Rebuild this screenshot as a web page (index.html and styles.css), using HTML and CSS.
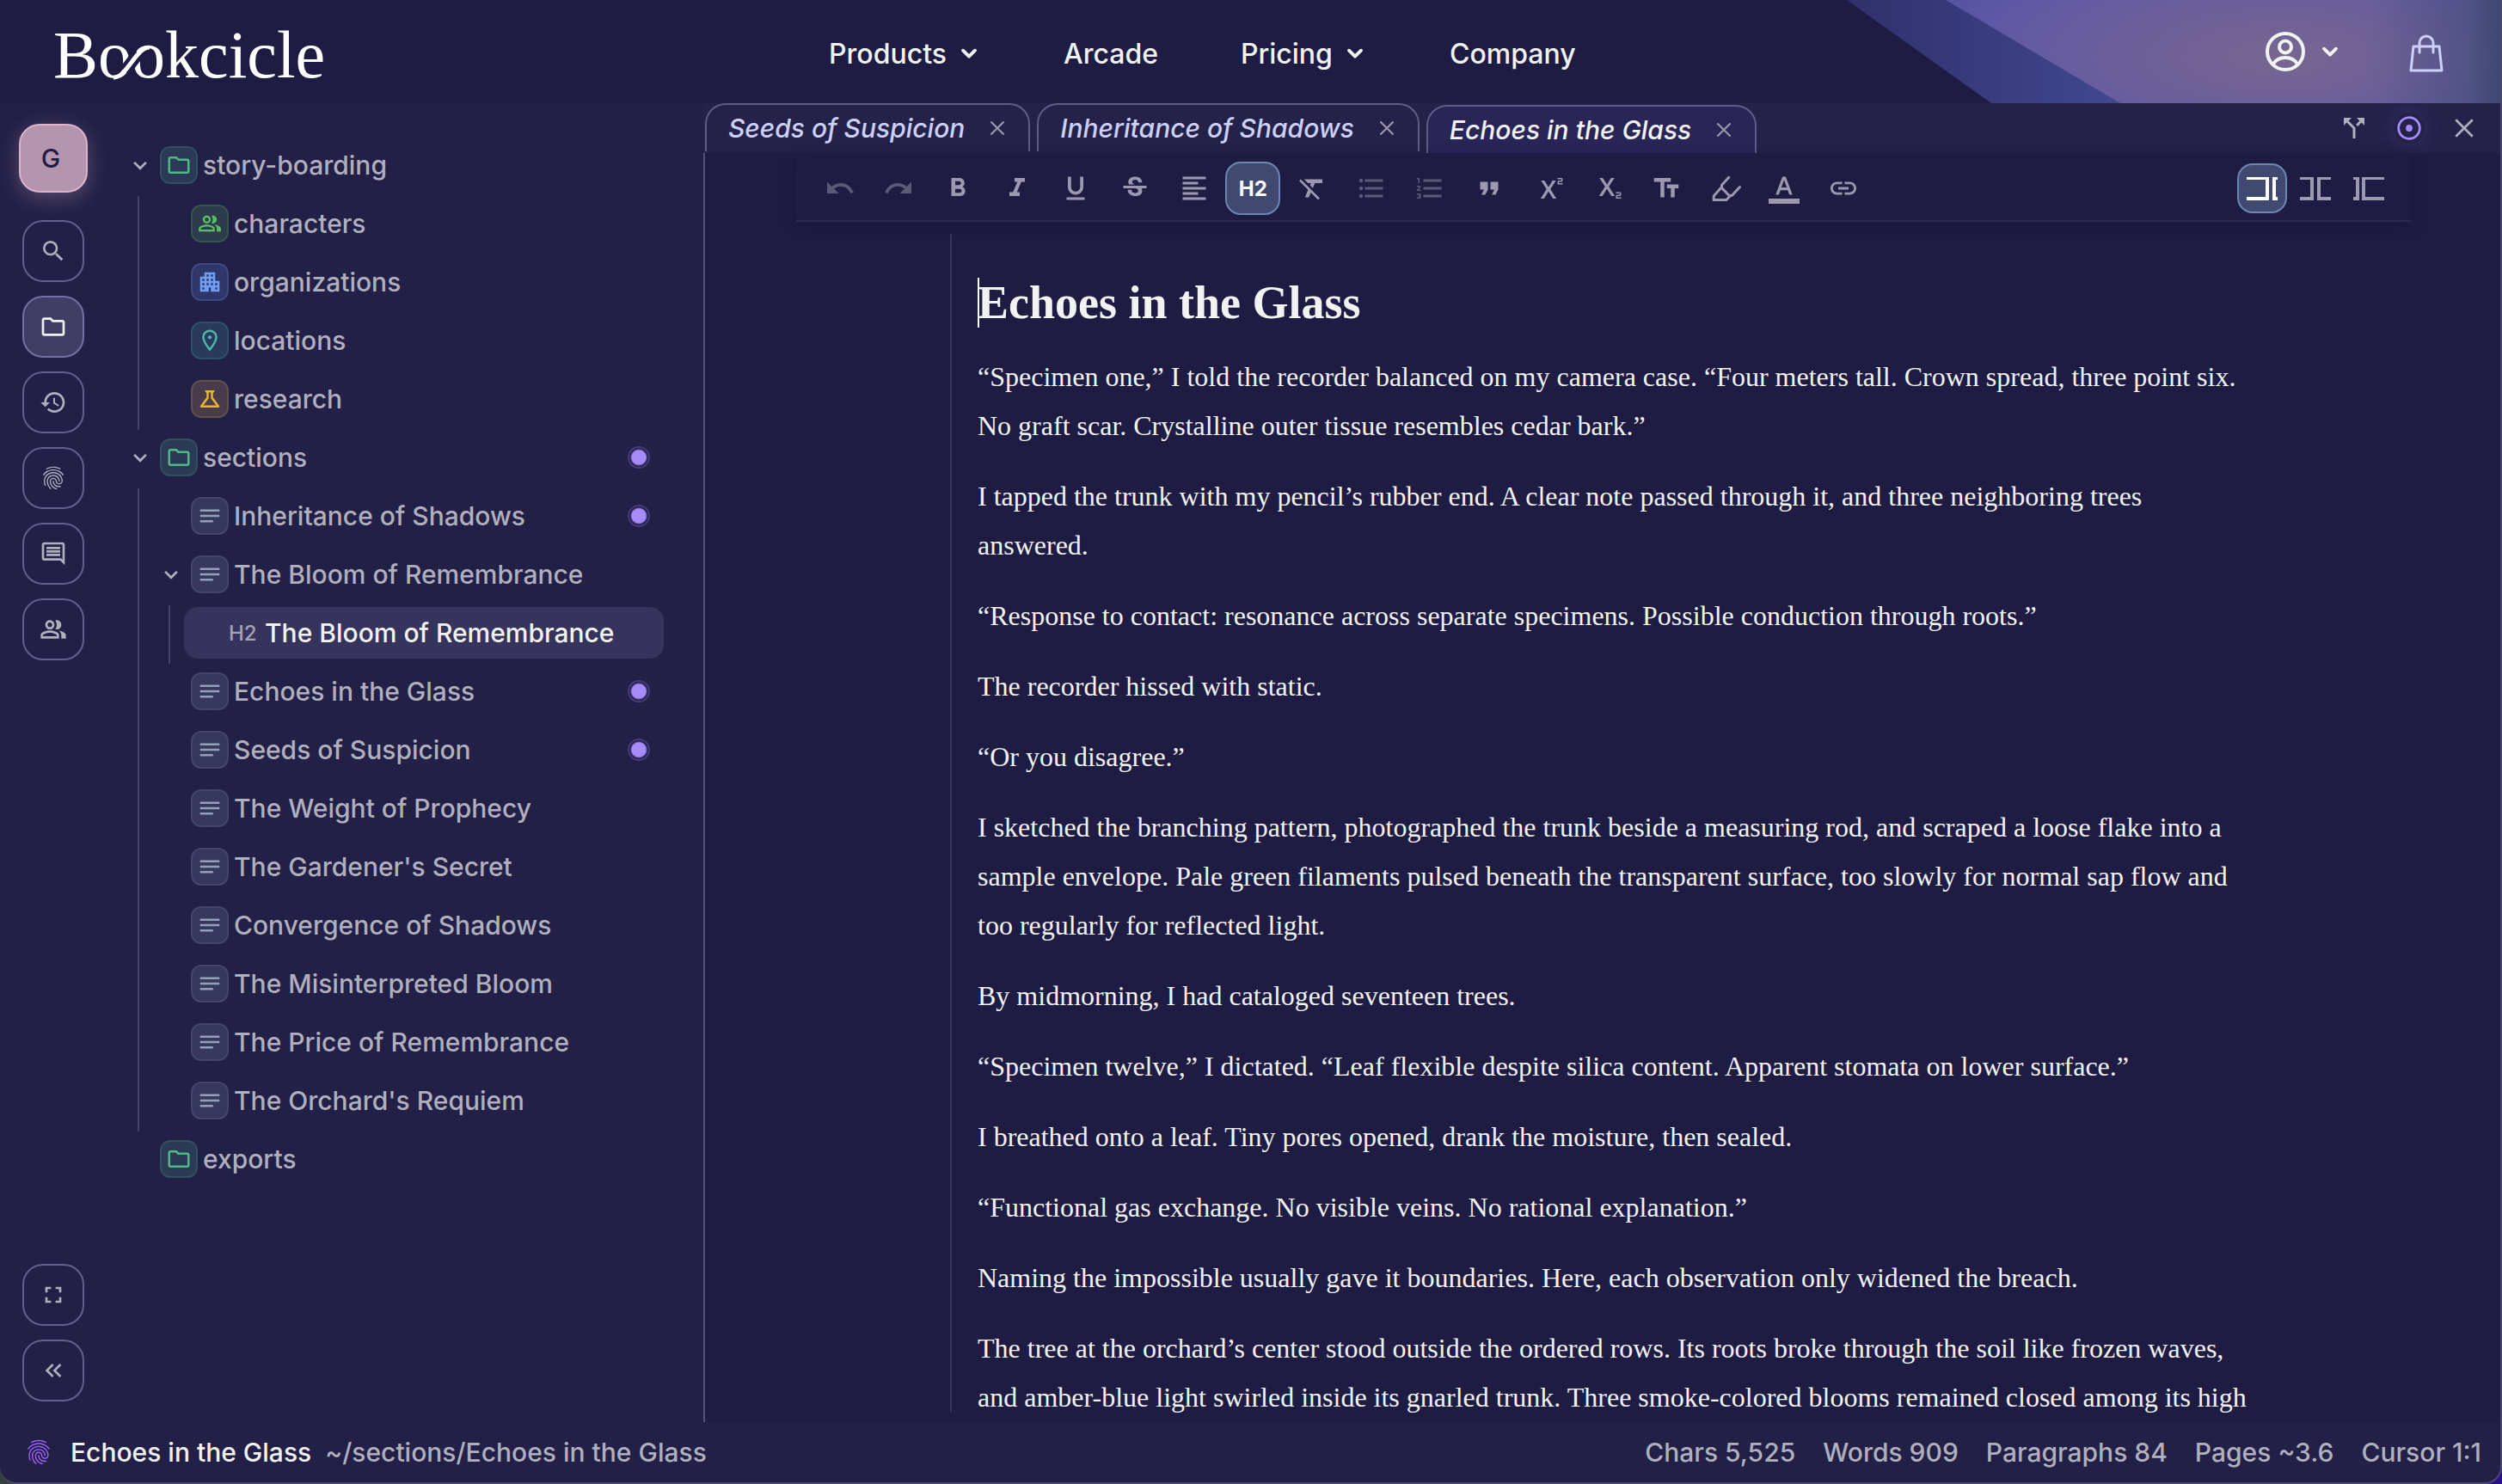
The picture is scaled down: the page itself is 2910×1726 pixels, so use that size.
FILE: index.html
```html
<!DOCTYPE html>
<html lang="en">
<head>
    <meta charset="UTF-8">
    <meta name="viewport" content="width=device-width, initial-scale=1.0">
    <title>Bookcicle</title>
    <link rel="stylesheet" href="styles.css">
</head>
<body>
    <!-- icon sprite -->
    <svg class="sprite" aria-hidden="true">
        <symbol id="i-chevron" viewBox="0 0 24 24"><path d="M6 9.200l6 6 6-6" fill="none" stroke="currentColor" stroke-width="3.300" stroke-linecap="round" stroke-linejoin="round"/></symbol>
        <symbol id="i-chevron-thin" viewBox="0 0 24 24"><path d="M6.500 9.500l5.500 5.500 5.500-5.500" fill="none" stroke="currentColor" stroke-width="2.200"/></symbol>
        <symbol id="i-close" viewBox="0 0 24 24"><path d="M5.5 5.5l13 13M18.500 5.500l-13 13" fill="none" stroke="currentColor" stroke-width="1.800"/></symbol>
        <symbol id="i-search" viewBox="0 0 24 24"><path d="M15.5 14h-.79l-.28-.27A6.471 6.471 0 0 0 16 9.5 6.5 6.5 0 1 0 9.500 16c1.610 0 3.090-.59 4.230-1.570l.27.28v.79l5 4.990L20.490 19l-4.990-5zm-6 0C7.010 14 5 11.990 5 9.500S7.010 5 9.500 5 14 7.010 14 9.500 11.990 14 9.500 14z"/></symbol>
        <symbol id="i-folder" viewBox="0 0 24 24"><path d="M9.170 6l2 2H20v10H4V6h5.170M10 4H4c-1.100 0-1.990.9-1.990 2L2 18c0 1.100.9 2 2 2h16c1.100 0 2-.9 2-2V8c0-1.100-.9-2-2-2h-8l-2-2z"/></symbol>
        <symbol id="i-history" viewBox="0 0 24 24"><path d="M13 3c-4.970 0-9 4.030-9 9H1l3.890 3.890.07.14L9 12H6c0-3.870 3.130-7 7-7s7 3.130 7 7-3.130 7-7 7c-1.930 0-3.680-.79-4.940-2.060l-1.420 1.420C8.270 19.990 10.510 21 13 21c4.970 0 9-4.030 9-9s-4.030-9-9-9zm-1 5v5l4.280 2.540.72-1.210-3.500-2.080V8H12z"/></symbol>
        <symbol id="i-fingerprint" viewBox="0 0 24 24"><path d="M17.81 4.47c-.08 0-.16-.02-.23-.06C15.66 3.42 14 3 12.01 3c-1.98 0-3.86.47-5.57 1.41-.24.13-.54.04-.68-.2-.13-.24-.04-.55.2-.68C7.82 2.52 9.86 2 12.01 2c2.13 0 3.99.47 6.03 1.52.25.13.34.43.21.67-.09.18-.26.28-.44.28zM3.5 9.72c-.1 0-.2-.03-.29-.09-.23-.16-.28-.47-.12-.7.99-1.4 2.25-2.5 3.75-3.27C9.98 4.04 14 4.03 17.15 5.65c1.5.77 2.76 1.86 3.75 3.25.16.22.11.54-.12.7-.23.16-.54.11-.7-.12-.9-1.26-2.04-2.25-3.39-2.94-2.87-1.47-6.54-1.47-9.4.01-1.36.7-2.5 1.7-3.4 2.96-.08.14-.23.21-.39.21zm6.25 12.07c-.13 0-.26-.05-.35-.15-.87-.87-1.34-1.43-2.01-2.64-.69-1.23-1.05-2.73-1.05-4.34 0-2.97 2.54-5.39 5.66-5.39s5.66 2.42 5.66 5.39c0 .28-.22.5-.5.5s-.5-.22-.5-.5c0-2.42-2.09-4.39-4.66-4.39-2.57 0-4.66 1.97-4.66 4.39 0 1.44.32 2.77.93 3.85.64 1.15 1.08 1.64 1.85 2.42.19.2.19.51 0 .71-.11.1-.24.15-.37.15zm7.17-1.85c-1.19 0-2.24-.3-3.1-.89-1.49-1.01-2.38-2.65-2.38-4.39 0-.28.22-.5.5-.5s.5.22.5.5c0 1.41.72 2.74 1.94 3.56.71.48 1.54.71 2.54.71.24 0 .64-.03 1.04-.1.27-.05.53.13.58.41.05.27-.13.53-.41.58-.57.11-1.07.12-1.21.12zM14.91 22c-.04 0-.09-.01-.13-.02-1.59-.44-2.63-1.03-3.72-2.1-1.4-1.39-2.17-3.24-2.17-5.22 0-1.62 1.38-2.94 3.08-2.94 1.7 0 3.08 1.32 3.08 2.94 0 1.07.93 1.94 2.08 1.94s2.08-.87 2.08-1.94c0-3.77-3.25-6.83-7.25-6.83-2.84 0-5.44 1.58-6.61 4.03-.39.81-.59 1.76-.59 2.8 0 .78.07 2.01.67 3.61.1.26-.03.55-.29.64-.26.1-.55-.04-.64-.29-.49-1.31-.73-2.61-.73-3.96 0-1.2.23-2.29.68-3.24 1.33-2.79 4.28-4.6 7.51-4.6 4.55 0 8.25 3.51 8.25 7.83 0 1.62-1.38 2.94-3.08 2.94s-3.08-1.32-3.08-2.94c0-1.07-.93-1.94-2.08-1.94s-2.08.87-2.08 1.94c0 1.71.66 3.31 1.87 4.51.95.94 1.86 1.46 3.27 1.85.27.07.42.35.35.61-.05.23-.26.38-.47.38z"/></symbol>
        <symbol id="i-comment" viewBox="0 0 24 24"><path d="M21.99 4c0-1.1-.89-2-1.99-2H4c-1.1 0-2 .9-2 2v12c0 1.1.9 2 2 2h14l4 4-.01-18zM20 4v13.17L18.83 16H4V4h16zM6 12h12v2H6zm0-3h12v2H6zm0-3h12v2H6z"/></symbol>
        <symbol id="i-people" viewBox="0 0 24 24"><path d="M16.67 13.13C18.04 14.06 19 15.32 19 17v3h4v-3c0-2.18-3.57-3.47-6.33-3.87zM15 12c2.21 0 4-1.79 4-4s-1.79-4-4-4c-.47 0-.91.1-1.33.24C14.5 5.27 15 6.58 15 8s-.5 2.73-1.33 3.76c.42.14.86.24 1.33.24zM9 12c2.21 0 4-1.79 4-4s-1.79-4-4-4-4 1.79-4 4 1.79 4 4 4zm0-6c1.1 0 2 .9 2 2s-.9 2-2 2-2-.9-2-2 .9-2 2-2zM9 13c-2.67 0-8 1.34-8 4v3h16v-3c0-2.66-5.33-4-8-4zm6 5H3v-.99C3.2 16.29 6.3 15 9 15s5.8 1.29 6 2v1z"/></symbol>
        <symbol id="i-fullscreen" viewBox="0 0 24 24"><path d="M7 14H5v5h5v-2H7v-3zm-2-4h2V7h3V5H5v5zm12 7h-3v2h5v-5h-2v3zM14 5v2h3v3h2V5h-5z"/></symbol>
        <symbol id="i-collapse" viewBox="0 0 24 24"><path d="M17.59 18L19 16.59 14.42 12 19 7.41 17.59 6l-6 6zM11 18l1.41-1.41L7.83 12l4.58-4.59L11 6l-6 6z"/></symbol>
        <symbol id="i-building" viewBox="0 0 24 24"><path d="M17 11V3H7v4H3v14h8v-4h2v4h8V11h-4zM7 19H5v-2h2v2zm0-4H5v-2h2v2zm0-4H5V9h2v2zm4 4H9v-2h2v2zm0-4H9V9h2v2zm0-4H9V5h2v2zm4 8h-2v-2h2v2zm0-4h-2V9h2v2zm0-4h-2V5h2v2zm4 12h-2v-2h2v2zm0-4h-2v-2h2v2z"/></symbol>
        <symbol id="i-pin" viewBox="0 0 24 24"><path d="M12 2C8.13 2 5 5.13 5 9c0 5.25 7 13 7 13s7-7.75 7-13c0-3.87-3.13-7-7-7zM7 9c0-2.76 2.24-5 5-5s5 2.24 5 5c0 2.88-2.88 7.19-5 9.88C9.92 16.21 7 11.85 7 9z"/><circle cx="12" cy="9" r="1.700"/></symbol>
        <symbol id="i-flask" viewBox="0 0 24 24"><path d="M13 11.33L18 18H6l5-6.67V6h2m2.96-2H8.04c-.42 0-.65.48-.39.81L9 6.5v4.17L3.2 18.4c-.49.66-.02 1.6.8 1.6h16c.82 0 1.29-.94.8-1.6L15 10.67V6.5l1.35-1.69c.26-.33.03-.81-.39-.81z"/></symbol>
        <symbol id="i-notes" viewBox="0 0 24 24"><path d="M3 18h12v-2H3v2zM3 6v2h18V6H3zm0 7h18v-2H3v2z"/></symbol>
        <symbol id="i-undo" viewBox="0 0 24 24"><path d="M12.5 8c-2.65 0-5.05.99-6.9 2.6L2 7v9h9l-3.62-3.62c1.39-1.16 3.16-1.88 5.12-1.88 3.54 0 6.55 2.31 7.6 5.5l2.37-.78C21.08 11.03 17.15 8 12.5 8z"/></symbol>
        <symbol id="i-redo" viewBox="0 0 24 24"><path d="M18.4 10.6C16.55 8.99 14.15 8 11.5 8c-4.65 0-8.58 3.03-9.96 7.22L3.9 16c1.05-3.19 4.05-5.5 7.6-5.5 1.95 0 3.73.72 5.12 1.88L13 16h9V7l-3.6 3.6z"/></symbol>
        <symbol id="i-bold" viewBox="0 0 24 24"><path d="M15.6 10.79c.97-.67 1.65-1.77 1.65-2.79 0-2.26-1.75-4-4-4H7v14h7.04c2.09 0 3.71-1.7 3.71-3.79 0-1.52-.86-2.82-2.15-3.42zM10 6.5h3c.83 0 1.5.67 1.5 1.5s-.67 1.5-1.5 1.5h-3v-3zm3.5 9H10v-3h3.5c.83 0 1.5.67 1.5 1.5s-.67 1.5-1.5 1.5z"/></symbol>
        <symbol id="i-italic" viewBox="0 0 24 24"><path d="M10 4v3h2.21l-3.42 8H6v3h8v-3h-2.21l3.42-8H18V4z"/></symbol>
        <symbol id="i-underline" viewBox="0 0 24 24"><path d="M12 17c3.31 0 6-2.69 6-6V3h-2.5v8c0 1.93-1.57 3.5-3.5 3.5S8.500 12.93 8.500 11V3H6v8c0 3.310 2.690 6 6 6zm-7 2v2h14v-2H5z"/></symbol>
        <symbol id="i-strike" viewBox="0 0 24 24"><path d="M6.850 7.080C6.850 4.370 9.450 3 12.240 3c1.640 0 3 .49 3.900 1.280.77.65 1.460 1.730 1.460 3.240h-3.010c0-.31-.05-.59-.15-.85-.29-.86-1.200-1.280-2.250-1.280-1.860 0-2.340 1.020-2.340 1.700 0 .48.25.88.74 1.210.38.25.77.48 1.410.7H7.390c-.21-.34-.54-.89-.54-1.920zM21 12v-2H3v2h9.620c1.150.45 1.960.75 1.960 1.970 0 1-.81 1.670-2.280 1.670-1.540 0-2.930-.54-2.930-2.510H6.400c0 .55.08 1.130.24 1.580.81 2.290 3.290 3.300 5.670 3.300 2.270 0 5.300-.89 5.300-4.050 0-.3-.01-1.160-.48-1.940H21V12z"/></symbol>
        <symbol id="i-align" viewBox="0 0 24 24"><path d="M15 15H3v2h12v-2zm0-8H3v2h12V7zM3 13h18v-2H3v2zm0 8h18v-2H3v2zM3 3v2h18V3H3z"/></symbol>
        <symbol id="i-clear" viewBox="0 0 24 24"><path d="M3.27 5L2 6.27l6.97 6.97L6.5 19h3l1.57-3.66L16.73 21 18 19.73 3.55 5.27 3.27 5zM6 5v.18L8.82 8h2.4l-.72 1.68 2.1 2.1L14.21 8H20V5H6z"/></symbol>
        <symbol id="i-bullets" viewBox="0 0 24 24"><path d="M4 10.5c-.83 0-1.5.67-1.5 1.5s.67 1.5 1.5 1.5 1.5-.67 1.5-1.5-.67-1.5-1.5-1.5zm0-6c-.83 0-1.5.67-1.5 1.5S3.17 7.5 4 7.5 5.5 6.83 5.5 6 4.83 4.5 4 4.5zm0 12c-.83 0-1.5.68-1.5 1.5s.68 1.5 1.5 1.5 1.5-.68 1.5-1.5-.67-1.5-1.5-1.5zM7 19h14v-2H7v2zm0-6h14v-2H7v2zm0-8v2h14V5H7z"/></symbol>
        <symbol id="i-numbers" viewBox="0 0 24 24"><path d="M2 17h2v.5H3v1h1v.5H2v1h3v-4H2v1zm1-9h1V4H2v1h1v3zm-1 3h1.8L2 13.1v.9h3v-1H3.2L5 10.9V10H2v1zm5-6v2h14V5H7zm0 14h14v-2H7v2zm0-6h14v-2H7v2z"/></symbol>
        <symbol id="i-quote" viewBox="0 0 24 24"><path d="M6 17h3l2-4V7H5v6h3zm8 0h3l2-4V7h-6v6h3z"/></symbol>
        <symbol id="i-super" viewBox="0 0 24 24"><path d="M22 7h-2v1h3v1h-4V7c0-.55.45-1 1-1h2V5h-3V4h3c.55 0 1 .45 1 1v1c0 .55-.45 1-1 1zM5.88 20h2.66l3.4-5.42h.12l3.4 5.42h2.66l-4.65-7.27L17.81 6h-2.68l-3.07 4.99h-.12L8.85 6H6.19l4.32 6.73L5.88 20z"/></symbol>
        <symbol id="i-sub" viewBox="0 0 24 24"><path d="M22 18h-2v1h3v1h-4v-2c0-.55.45-1 1-1h2v-1h-3v-1h3c.55 0 1 .45 1 1v1c0 .55-.45 1-1 1zM5.88 18h2.66l3.4-5.42h.12l3.4 5.42h2.66l-4.65-7.27L17.81 4h-2.68l-3.07 4.99h-.12L8.85 4H6.19l4.32 6.73L5.88 18z"/></symbol>
        <symbol id="i-size" viewBox="0 0 24 24"><path d="M2.5 4v3h5v12h3V7h5V4h-13zm19 5h-9v3h3v7h3v-7h3V9z"/></symbol>
        <symbol id="i-marker" viewBox="0 0 24 24"><path d="M14.500 3.500L9 9.500v2.200l5.800 6 2.200-.2 6-6.500M9 11l-6.200 7v3h9.700l3-3" fill="none" stroke="currentColor" stroke-width="2" stroke-linecap="round"/></symbol>
        <symbol id="i-color" viewBox="0 0 24 24"><path d="M0 20h24v4H0v-4zm5.490-3h2.420l1.270-3.580h5.650L16.090 17h2.420L13.250 3h-2.500L5.490 17zm4.420-5.610l2.030-5.790h.12l2.030 5.790H9.910z"/></symbol>
        <symbol id="i-link" viewBox="0 0 24 24"><path d="M3.9 12c0-1.71 1.39-3.1 3.1-3.1h4V7H7c-2.76 0-5 2.24-5 5s2.24 5 5 5h4v-1.9H7c-1.71 0-3.1-1.39-3.1-3.1zM8 13h8v-2H8v2zm9-6h-4v1.9h4c1.71 0 3.1 1.39 3.1 3.1s-1.39 3.1-3.1 3.1h-4V17h4c2.76 0 5-2.24 5-5s-2.24-5-5-5z"/></symbol>
        <symbol id="i-split" viewBox="0 0 24 24"><path d="M14 4l2.29 2.29-2.88 2.88 1.42 1.42 2.88-2.88L20 10V4zm-4 0H4v6l2.29-2.29 4.71 4.7V20h2v-8.41l-5.29-5.3z"/></symbol>
        <symbol id="i-target" viewBox="0 0 24 24"><circle cx="12" cy="12" r="8.200" fill="none" stroke="currentColor" stroke-width="1.800"/><circle cx="12" cy="12" r="2.600"/></symbol>
        <symbol id="i-dock-right" viewBox="0 0 36 36"><path d="M0 5h26v27H0v-4h22V8H0zM30 5h6v3h-2v20h2v4h-6z"/></symbol>
        <symbol id="i-dock-center" viewBox="0 0 36 36"><path d="M0 5h16v27H0v-4h12V8H0zM20 5h16v3H24v20h12v4H20z"/></symbol>
        <symbol id="i-dock-left" viewBox="0 0 36 36"><path d="M0 5h7v27H0v-4h3V8H0zM10 5h26v3H14v20h22v4H10z"/></symbol>
        <symbol id="i-user" viewBox="0 0 48 48"><g fill="none" stroke="currentColor" stroke-width="4"><circle cx="24" cy="24" r="21"/><circle cx="24" cy="18.500" r="7"/><path d="M10 38.500c3-5 8-7.500 14-7.500s11 2.500 14 7.500"/></g></symbol>
        <symbol id="i-bag" viewBox="0 0 48 48"><g fill="none" stroke="currentColor" stroke-width="3" stroke-linecap="round" stroke-linejoin="round"><path d="M9 16h30l3 28H6z"/><path d="M16 23V12a8 8 0 0 1 16 0v11"/></g></symbol>
    </svg>

    <div class="window">
        <header class="header">
            <div class="header-art" aria-hidden="true">
                <div class="art-band"></div>
                <div class="art-glow"></div>
            </div>
            <a class="logo" href="#">B<span class="logo-oo">oo<svg class="logo-swash" viewBox="0 0 78 90" aria-hidden="true"><path class="swash-gap" d="M31 64L47 43"/><path class="swash-line" d="M18 71C33 72 44 36 60 36"/></svg></span>kcicle</a>
            <nav class="nav">
                <a href="#">Products <svg class="nav-chevron"><use href="#i-chevron"/></svg></a>
                <a href="#">Arcade</a>
                <a href="#">Pricing <svg class="nav-chevron"><use href="#i-chevron"/></svg></a>
                <a href="#">Company</a>
            </nav>
            <div class="account">
                <button class="user-btn" aria-label="Account"><svg class="user-icon"><use href="#i-user"/></svg><svg class="nav-chevron"><use href="#i-chevron"/></svg></button>
                <button class="bag-btn" aria-label="Bag"><svg class="bag-icon"><use href="#i-bag"/></svg></button>
            </div>
        </header>

        <main class="main">
            <aside class="rail">
                <button class="rail-avatar">G</button>
                <button class="rail-btn" aria-label="Search"><svg><use href="#i-search"/></svg></button>
                <button class="rail-btn active" aria-label="Files"><svg><use href="#i-folder"/></svg></button>
                <button class="rail-btn" aria-label="History"><svg><use href="#i-history"/></svg></button>
                <button class="rail-btn" aria-label="Fingerprint"><svg><use href="#i-fingerprint"/></svg></button>
                <button class="rail-btn" aria-label="Comments"><svg><use href="#i-comment"/></svg></button>
                <button class="rail-btn" aria-label="People"><svg><use href="#i-people"/></svg></button>
                <span class="rail-space"></span>
                <button class="rail-btn" aria-label="Full screen"><svg><use href="#i-fullscreen"/></svg></button>
                <button class="rail-btn" aria-label="Collapse"><svg><use href="#i-collapse"/></svg></button>
            </aside>

            <nav class="tree" aria-label="Project files">
                <div class="row"><svg class="twisty"><use href="#i-chevron-thin"/></svg><span class="badge green"><svg><use href="#i-folder"/></svg></span>story-boarding</div>
                <div class="branch">
                    <div class="row"><span class="twisty"></span><span class="badge lime"><svg><use href="#i-people"/></svg></span>characters</div>
                    <div class="row"><span class="twisty"></span><span class="badge blue"><svg><use href="#i-building"/></svg></span>organizations</div>
                    <div class="row"><span class="twisty"></span><span class="badge teal"><svg><use href="#i-pin"/></svg></span>locations</div>
                    <div class="row"><span class="twisty"></span><span class="badge amber"><svg><use href="#i-flask"/></svg></span>research</div>
                </div>
                <div class="row"><svg class="twisty"><use href="#i-chevron-thin"/></svg><span class="badge green"><svg><use href="#i-folder"/></svg></span>sections<span class="dot"></span></div>
                <div class="branch">
                    <div class="row"><span class="twisty"></span><span class="badge"><svg><use href="#i-notes"/></svg></span>Inheritance of Shadows<span class="dot"></span></div>
                    <div class="row"><svg class="twisty"><use href="#i-chevron-thin"/></svg><span class="badge"><svg><use href="#i-notes"/></svg></span>The Bloom of Remembrance</div>
                    <div class="branch">
                        <div class="row selected"><span class="level">H2</span>The Bloom of Remembrance</div>
                    </div>
                    <div class="row"><span class="twisty"></span><span class="badge"><svg><use href="#i-notes"/></svg></span>Echoes in the Glass<span class="dot"></span></div>
                    <div class="row"><span class="twisty"></span><span class="badge"><svg><use href="#i-notes"/></svg></span>Seeds of Suspicion<span class="dot"></span></div>
                    <div class="row"><span class="twisty"></span><span class="badge"><svg><use href="#i-notes"/></svg></span>The Weight of Prophecy</div>
                    <div class="row"><span class="twisty"></span><span class="badge"><svg><use href="#i-notes"/></svg></span>The Gardener's Secret</div>
                    <div class="row"><span class="twisty"></span><span class="badge"><svg><use href="#i-notes"/></svg></span>Convergence of Shadows</div>
                    <div class="row"><span class="twisty"></span><span class="badge"><svg><use href="#i-notes"/></svg></span>The Misinterpreted Bloom</div>
                    <div class="row"><span class="twisty"></span><span class="badge"><svg><use href="#i-notes"/></svg></span>The Price of Remembrance</div>
                    <div class="row"><span class="twisty"></span><span class="badge"><svg><use href="#i-notes"/></svg></span>The Orchard's Requiem</div>
                </div>
                <div class="row"><span class="twisty"></span><span class="badge green"><svg><use href="#i-folder"/></svg></span>exports</div>
            </nav>

            <section class="workspace">
                <div class="tabs">
                    <div class="tab"><button class="tab-name">Seeds of Suspicion</button><button class="tab-close" aria-label="Close tab"><svg><use href="#i-close"/></svg></button></div>
                    <div class="tab"><button class="tab-name">Inheritance of Shadows</button><button class="tab-close" aria-label="Close tab"><svg><use href="#i-close"/></svg></button></div>
                    <div class="tab current"><button class="tab-name">Echoes in the Glass</button><button class="tab-close" aria-label="Close tab"><svg><use href="#i-close"/></svg></button></div>
                    <div class="tab-tools">
                        <button aria-label="Split"><svg><use href="#i-split"/></svg></button>
                        <button class="focus" aria-label="Focus"><svg><use href="#i-target"/></svg></button>
                        <button aria-label="Close"><svg><use href="#i-close"/></svg></button>
                    </div>
                </div>

                <div class="editor">
                    <div class="toolbar">
                        <div class="format">
                            <button disabled aria-label="Undo"><svg><use href="#i-undo"/></svg></button>
                            <button disabled aria-label="Redo"><svg><use href="#i-redo"/></svg></button>
                            <button aria-label="Bold"><svg><use href="#i-bold"/></svg></button>
                            <button aria-label="Italic"><svg><use href="#i-italic"/></svg></button>
                            <button aria-label="Underline"><svg><use href="#i-underline"/></svg></button>
                            <button aria-label="Strikethrough"><svg><use href="#i-strike"/></svg></button>
                            <button aria-label="Align"><svg><use href="#i-align"/></svg></button>
                            <button class="on">H2</button>
                            <button aria-label="Clear formatting"><svg><use href="#i-clear"/></svg></button>
                            <button disabled aria-label="Bulleted list"><svg><use href="#i-bullets"/></svg></button>
                            <button disabled aria-label="Numbered list"><svg><use href="#i-numbers"/></svg></button>
                            <button aria-label="Quote"><svg><use href="#i-quote"/></svg></button>
                            <button aria-label="Superscript"><svg><use href="#i-super"/></svg></button>
                            <button aria-label="Subscript"><svg><use href="#i-sub"/></svg></button>
                            <button aria-label="Text size"><svg><use href="#i-size"/></svg></button>
                            <button aria-label="Highlight"><svg><use href="#i-marker"/></svg></button>
                            <button aria-label="Text color"><svg><use href="#i-color"/></svg></button>
                            <button aria-label="Link"><svg><use href="#i-link"/></svg></button>
                        </div>
                        <div class="docking">
                            <button class="on" aria-label="Dock right"><svg><use href="#i-dock-right"/></svg></button>
                            <button aria-label="Dock center"><svg><use href="#i-dock-center"/></svg></button>
                            <button aria-label="Dock left"><svg><use href="#i-dock-left"/></svg></button>
                        </div>
                    </div>

                    <article class="page">
                        <h2><span class="caret"></span>Echoes in the Glass</h2>
                        <p>“Specimen one,” I told the recorder balanced on my camera case. “Four meters tall. Crown spread, three point six. No graft scar. Crystalline outer tissue resembles cedar bark.”</p>
                        <p>I tapped the trunk with my pencil’s rubber end. A clear note passed through it, and three neighboring trees answered.</p>
                        <p>“Response to contact: resonance across separate specimens. Possible conduction through roots.”</p>
                        <p>The recorder hissed with static.</p>
                        <p>“Or you disagree.”</p>
                        <p>I sketched the branching pattern, photographed the trunk beside a measuring rod, and scraped a loose flake into a sample envelope. Pale green filaments pulsed beneath the transparent surface, too slowly for normal sap flow and too regularly for reflected light.</p>
                        <p>By midmorning, I had cataloged seventeen trees.</p>
                        <p>“Specimen twelve,” I dictated. “Leaf flexible despite silica content. Apparent stomata on lower surface.”</p>
                        <p>I breathed onto a leaf. Tiny pores opened, drank the moisture, then sealed.</p>
                        <p>“Functional gas exchange. No visible veins. No rational explanation.”</p>
                        <p>Naming the impossible usually gave it boundaries. Here, each observation only widened the breach.</p>
                        <p>The tree at the orchard’s center stood outside the ordered rows. Its roots broke through the soil like frozen waves, and amber-blue light swirled inside its gnarled trunk. Three smoke-colored blooms remained closed among its high</p>
                    </article>
                </div>
            </section>
        </main>

        <footer class="status">
            <svg class="status-icon"><use href="#i-fingerprint"/></svg>
            <span class="status-title">Echoes in the Glass</span>
            <span class="status-path">~/sections/Echoes in the Glass</span>
            <div class="stats">
                <span>Chars 5,525</span>
                <span>Words 909</span>
                <span>Paragraphs 84</span>
                <span>Pages ~3.6</span>
                <span>Cursor 1:1</span>
            </div>
        </footer>
    </div>
</body>
</html>
```

FILE: styles.css
```css
* {
    box-sizing: border-box;
}
body {
    margin: 0;
    background: linear-gradient(90deg, #35423f, #2a0f8a);
    font-family: Inter, "Liberation Sans", sans-serif;
    font-size: 30px;
    font-weight: 500;
    color: #b0afbe;
}
svg {
    display: block;
    fill: currentColor;
}
button {
    display: flex;
    align-items: center;
    justify-content: center;
    padding: 0;
    border: none;
    background: none;
    font: inherit;
    color: inherit;
    cursor: pointer;
}
a {
    color: inherit;
    text-decoration: none;
}
.sprite {
    position: absolute;
    width: 0;
    height: 0;
}
.window {
    display: flex;
    flex-direction: column;
    height: 100vh;
    overflow: hidden;
    background: #222046;
    border-right: 2px solid #4a4870;
    border-bottom: 2px solid #4a4870;
    border-radius: 0 0 20px 20px;
}

/* header */
.header {
    position: relative;
    display: flex;
    align-items: center;
    flex: 0 0 120px;
    padding: 0 62px 0 62px;
    background: #1f1c44;
    color: #f2f2f2;
}
.header-art {
    position: absolute;
    top: 0;
    right: 0;
    bottom: 0;
    width: 760px;
}
.art-band,
.art-glow {
    position: absolute;
    top: 0;
    right: 0;
    bottom: 0;
}
.art-band {
    left: 0;
    background: linear-gradient(90deg, #31306c, #40488f 320px);
    clip-path: polygon(0 0, 100% 0, 100% 100%, 168px 100%);
}
.art-glow {
    left: 115px;
    background:
        linear-gradient(90deg, rgba(62, 72, 112, 0) 76%, rgba(62, 72, 112, 0.5) 94%, #3f4872),
        radial-gradient(ellipse 420px 150px at 390px 66px, #776690, #6259a4 80%, #5653a2);
    clip-path: polygon(0 0, 100% 0, 100% 100%, 203px 100%);
}
.logo {
    position: relative;
    flex: 0 0 902px;
    padding-top: 8px;
    font-family: "Liberation Serif", serif;
    font-size: 78px;
    font-weight: 400;
    line-height: 90px;
    color: #fff;
}
/* the two o's are tied together like an infinity sign */
.logo-oo {
    display: inline-block;
    position: relative;
}
.logo-swash {
    position: absolute;
    top: 0;
    left: 0;
    width: 78px;
    height: 90px;
    fill: none;
}
.swash-gap {
    stroke: #1f1c44;
    stroke-width: 14;
}
.swash-line {
    stroke: #fff;
    stroke-width: 5;
}
.nav {
    position: relative;
    display: flex;
    gap: 96px;
    padding-top: 4px;
    font-size: 32px;
}
.nav a {
    display: flex;
    align-items: center;
    gap: 12px;
}
.nav-chevron {
    width: 28px;
    height: 28px;
}
.account {
    position: relative;
    display: flex;
    align-items: center;
    gap: 74px;
    margin-left: auto;
}
.user-btn {
    gap: 14px;
}
.user-icon {
    width: 48px;
    height: 48px;
}
.bag-btn {
    padding-top: 4px;
    color: #cdd0f8;
}
.bag-icon {
    width: 48px;
    height: 48px;
}

.main {
    display: flex;
    flex: 1;
    min-height: 0;
}

/* icon rail */
.rail {
    display: flex;
    flex-direction: column;
    align-items: center;
    gap: 16px;
    flex: 0 0 124px;
    padding: 24px 0;
}
.rail-avatar {
    width: 80px;
    height: 80px;
    margin-bottom: 16px;
    padding-right: 6px;
    background: #b594ae;
    border: 2px solid #dcb3cb;
    border-radius: 24px;
    box-shadow: 0 6px 24px rgba(220, 179, 203, 0.3);
    font-size: 30px;
    color: #1f1c44;
}
.rail-btn {
    flex: none;
    width: 72px;
    height: 72px;
    border: 2px solid #62608c;
    border-radius: 24px;
}
.rail-btn svg {
    width: 32px;
    height: 32px;
}
.rail-btn.active {
    background: #403e64;
    border-color: #7371a0;
    color: #f2f2f2;
}
.rail-space {
    flex: 1;
}

/* file tree */
.tree {
    flex: 0 0 694px;
    padding: 40px 46px 0 24px;
}
.tree,
.branch {
    display: flex;
    flex-direction: column;
}
.row {
    display: flex;
    align-items: center;
    flex: none;
    height: 60px;
    margin: 2px 0 6px;
    padding-right: 16px;
    border-radius: 16px;
    white-space: nowrap;
}
.twisty {
    flex: none;
    width: 30px;
    height: 30px;
    margin-right: 8px;
}
.badge {
    display: flex;
    align-items: center;
    justify-content: center;
    flex: none;
    width: 44px;
    height: 44px;
    margin-right: 6px;
    border: 2px solid #45446c;
    border-radius: 12px;
    background: #37365c;
    color: #93a0ba;
}
.badge svg {
    width: 30px;
    height: 30px;
}
.badge.green {
    background: #2b3b55;
    border-color: #2f5060;
    color: #52b788;
}
.badge.lime {
    background: #2d3b4e;
    border-color: #355450;
    color: #5bbf63;
}
.badge.lime svg {
    width: 28px;
    height: 28px;
}
.badge.blue {
    background: #2f376a;
    border-color: #3a4a80;
    color: #6f9ff5;
}
.badge.teal {
    background: #2a3a5a;
    border-color: #2f5068;
    color: #4db6ac;
}
.badge.amber {
    background: #483c4c;
    border-color: #62504a;
    color: #e8b430;
}
.branch {
    margin-left: 12px;
    border-left: 2px solid #454369;
    padding-left: 22px;
}
.branch .branch {
    padding-left: 16px;
}
.row.selected {
    padding-left: 52px;
    background: #36345c;
    color: #f2f2f2;
}
.level {
    width: 42px;
    font-size: 24px;
    color: #a3a2b6;
}
.dot {
    width: 26px;
    height: 26px;
    margin-left: auto;
    border: 2px solid #453b7c;
    border-radius: 50%;
    background: radial-gradient(circle, #a78bfa 8px, #262149 10px);
}

/* tabs */
.workspace {
    display: flex;
    flex-direction: column;
    flex: 1;
    min-width: 0;
}
.tabs {
    display: flex;
    align-items: flex-start;
    gap: 8px;
    flex: 0 0 58px;
    padding-left: 2px;
    background: #242249;
}
.tab {
    display: flex;
    align-items: center;
    gap: 24px;
    height: 56px;
    padding: 0 22px 0 25px;
    border: 2px solid #5f5d88;
    border-bottom: none;
    border-radius: 24px 24px 0 0;
    font-style: italic;
    color: #cdd0f8;
}
.tab.current {
    align-self: flex-end;
    background: #292557;
    color: #f2f2f2;
}
.tab-close {
    color: #9c98b0;
}
.tab-close svg {
    width: 28px;
    height: 28px;
}
.tab-tools {
    display: flex;
    gap: 28px;
    align-self: center;
    margin-left: auto;
    padding-right: 24px;
}
.tab-tools svg {
    width: 36px;
    height: 36px;
}
.focus {
    border-radius: 50%;
    box-shadow: 0 0 24px rgba(167, 139, 250, 0.15);
    color: #a78bfa;
}

/* editor */
.editor {
    display: flex;
    flex-direction: column;
    align-items: center;
    flex: 1;
    min-height: 0;
    padding-left: 2px;
    background: #1f1c44;
    border-left: 2px solid #55537e;
}
.toolbar {
    display: flex;
    align-items: center;
    justify-content: space-between;
    flex: 0 0 80px;
    width: 90%;
    padding: 4px 20px 0 16px;
    border-bottom: 2px solid #2d2a52;
    box-shadow: 0 4px 16px rgba(10, 8, 40, 0.25);
    color: #9c98b0;
}
.toolbar svg {
    width: 36px;
    height: 36px;
}
.format {
    display: grid;
    grid-template-columns: repeat(18, 1fr);
    justify-items: center;
    width: 1236px;
}
.format button {
    width: 64px;
    height: 62px;
}
.toolbar button:disabled {
    color: #5c5978;
}
.toolbar .on {
    background: #404970;
    border: 2px solid #6c86b4;
    border-radius: 18px;
    font-size: 24px;
    font-weight: 700;
    color: #fff;
}
.docking {
    display: flex;
    gap: 4px;
}
.docking button {
    width: 58px;
    height: 58px;
}
.page {
    flex: 1;
    min-height: 0;
    width: 100%;
    max-width: 1520px;
    margin-top: 14px;
    padding: 0 8px 0 32px;
    /* margin rule, stops a little above the status bar */
    background: linear-gradient(#38355e, #38355e) 0 0 / 2px calc(100% - 12px) no-repeat;
    overflow: hidden;
    font-family: "Liberation Serif", serif;
    font-size: 32px;
    font-weight: 400;
    line-height: 57px;
    color: #f2f2f2;
}
.page h2 {
    position: relative;
    margin: 50px 0 28px;
    font-size: 54px;
    line-height: 60px;
}
.caret {
    position: absolute;
    left: 0;
    top: 1px;
    width: 2px;
    height: 58px;
    background: #fff;
}
.page p {
    margin: 0 0 25px;
}
.page p:last-child {
    margin-bottom: 0;
}

/* status bar */
.status {
    display: flex;
    align-items: center;
    flex: 0 0 70px;
    padding: 0 22px 0 28px;
    white-space: nowrap;
}
.status-icon {
    width: 34px;
    height: 34px;
    margin-right: 20px;
    color: #a060ff;
}
.status-title {
    margin-right: 16px;
    color: #f2f2f2;
}
.stats {
    display: flex;
    gap: 32px;
    margin-left: auto;
}
```
